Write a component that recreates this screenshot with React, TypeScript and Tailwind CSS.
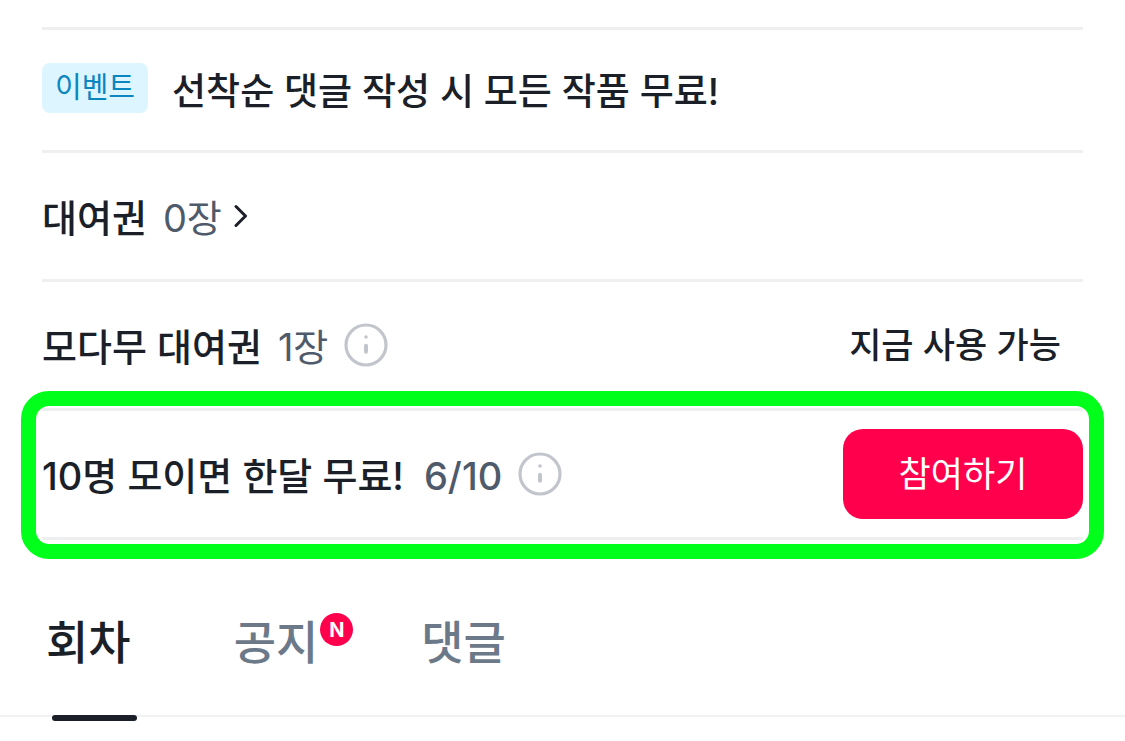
import { useState } from 'react';
import type { ReactNode } from 'react';

type TabId = 'episodes' | 'notice' | 'comments';

const TABS: { id: TabId; label: string; isNew?: boolean }[] = [
  { id: 'episodes', label: '회차' },
  { id: 'notice', label: '공지', isNew: true },
  { id: 'comments', label: '댓글' },
];

function InfoButton({ label }: { label: string }) {
  return (
    <button type="button" aria-label={label} className="shrink-0 text-[#c2c6cc]">
      <svg viewBox="0 0 44 44" className="block size-11" fill="none">
        <circle cx="22" cy="22" r="20" stroke="currentColor" strokeWidth="3.2" />
        <circle cx="22" cy="14" r="1.8" fill="currentColor" />
        <path d="M22 22.8v6" stroke="currentColor" strokeWidth="4" strokeLinecap="round" />
      </svg>
    </button>
  );
}

function Row({ children }: { children: ReactNode }) {
  return <div className="relative flex min-h-[129px] items-center border-t-3 border-[#eeeff0]">{children}</div>;
}

export default function App() {
  const [tab, setTab] = useState<TabId>('episodes');
  const [joined, setJoined] = useState(false);

  return (
    <main className="min-h-screen bg-white pt-[27px] pb-6 font-['Inter','Noto_Sans_CJK_KR',sans-serif] text-[38px] leading-[50px] font-medium text-[#1a1f28]">
      <section className="mx-[42px]">
        {/* Event */}
        <div className="flex min-h-[123px] items-center gap-6 border-t-3 border-[#eeeff0] pb-1">
          <span className="shrink-0 rounded-lg bg-[#dcf5ff] px-[13px] text-[29px] font-normal text-[#0b86bf]">이벤트</span>
          <p className="pt-2 text-[37px] leading-[50px]">선착순 댓글 작성 시 모든 작품 무료!</p>
        </div>

        {/* Rental tickets */}
        <Row>
          <a href="#tickets" className="flex items-center">
            <span className="pt-1">대여권</span>
            <span className="ml-4 pt-1 font-normal text-[#4f5b6b]">0장</span>
            <svg viewBox="0 0 14 24" className="ml-3 h-6 w-[14px]" fill="none">
              <path d="M2 2.5l9.5 9.5L2 21.5" stroke="currentColor" strokeWidth="3" strokeLinecap="round" strokeLinejoin="round" />
            </svg>
          </a>
        </Row>

        <Row>
          <span className="pt-1">모다무 대여권</span>
          <span className="mr-4 ml-4 pt-1 font-normal text-[#4f5b6b]">1장</span>
          <InfoButton label="모다무 대여권 안내" />
          <span className="ml-auto pr-[22px] text-[35px]">지금 사용 가능</span>
        </Row>

        {/* Group join */}
        <Row>
          <span className="pt-1">10명 모이면 한달 무료!</span>
          <span className="mr-4 ml-5 pt-1 text-[#4f5b6b]">6/10</span>
          <InfoButton label="한달 무료 안내" />
          <button
            type="button"
            onClick={() => setJoined(!joined)}
            aria-pressed={joined}
            className="ml-auto h-[90px] w-60 shrink-0 rounded-[20px] bg-[#ff004d] text-[35px] font-normal text-white"
          >
            참여하기
          </button>
          <div className="pointer-events-none absolute -inset-x-[21px] -top-5 -bottom-[22px] rounded-[28px] border-15 border-[#00ff1a]" />
        </Row>
        <div className="border-t-3 border-[#eeeff0]" />
      </section>

      <nav role="tablist" className="flex gap-[103px] border-b-2 border-[#f1f2f3] px-[46px]">
        {TABS.map((t) => (
          <button
            key={t.id}
            type="button"
            role="tab"
            aria-selected={tab === t.id}
            onClick={() => setTab(t.id)}
            className={`relative h-[175px] pt-7 text-[46px] ${tab === t.id ? 'text-[#1a1f28]' : 'text-[#6b7989]'}`}
          >
            {t.label}
            {t.isNew && (
              <span className="absolute top-[73px] left-full ml-0.5 flex size-[33px] items-center justify-center rounded-full bg-[#ff004d] text-[20px] leading-none font-bold text-white">
                N
              </span>
            )}
            {tab === t.id && <span className="absolute -right-1.5 -bottom-1.5 left-1.5 h-1.5 rounded-full bg-[#1a1f28]" />}
          </button>
        ))}
      </nav>
    </main>
  );
}
